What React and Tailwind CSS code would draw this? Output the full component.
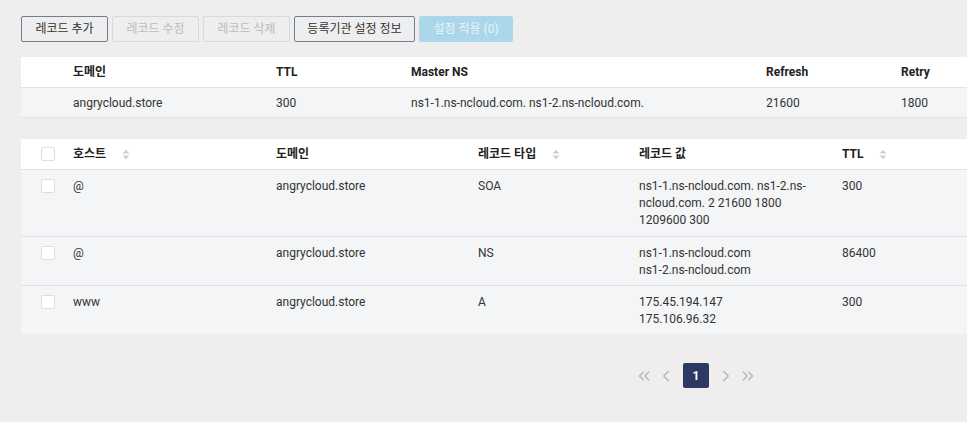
import { ChevronsLeft, ChevronLeft, ChevronRight, ChevronsRight } from 'lucide-react';

const font = { fontFamily: "Roboto, 'Noto Sans CJK KR', sans-serif" };

function SortIcon() {
  return (
    <svg width="8" height="11" viewBox="0 0 8 11" className="ml-[16px] shrink-0">
      <path d="M4 0.5 L7.5 4.5 H0.5 Z" fill="#cfd1d4" />
      <path d="M4 10.5 L7.5 6.5 H0.5 Z" fill="#cfd1d4" />
    </svg>
  );
}

function Checkbox() {
  return <span className="block w-[14px] h-[14px] bg-white border border-[#dcdee2] rounded-[2px]" />;
}

const zoneCols = 'grid grid-cols-[203px_135px_355px_135px_470px]';
const recCols = 'grid grid-cols-[52px_203px_202px_161px_203px_529px]';

const records = [
  { host: '@', type: 'SOA', value: ['ns1-1.ns-ncloud.com. ns1-2.ns-', 'ncloud.com. 2 21600 1800', '1209600 300'], ttl: '300' },
  { host: '@', type: 'NS', value: ['ns1-1.ns-ncloud.com', 'ns1-2.ns-ncloud.com'], ttl: '86400' },
  { host: 'www', type: 'A', value: ['175.45.194.147', '175.106.96.32'], ttl: '300' },
];

export default function App() {
  const btn = 'h-[26px] text-[12px] border rounded-[2px] flex items-center justify-center whitespace-nowrap';
  return (
    <div className="w-[967px] h-[422px] overflow-hidden bg-[#eeeeee] text-[12px] text-[#333]" style={font}>
      <div className="w-[1350px] ml-[21px] pt-[16px]">
        <div className="flex gap-[4px]">
          <button className={`${btn} w-[87px] border-[#6f8094] text-[#333]`}>레코드 추가</button>
          <button className={`${btn} w-[87px] border-[#d7d9dc] text-[#bcbcbc]`}>레코드 수정</button>
          <button className={`${btn} w-[87px] border-[#d7d9dc] text-[#bcbcbc]`}>레코드 삭제</button>
          <button className={`${btn} w-[121px] border-[#6f8094] text-[#333]`}>등록기관 설정 정보</button>
          <button className={`${btn} w-[94px] border-[#acd7ea] bg-[#acd7ea] text-[#e8f4fa]`}>설정 적용 (0)</button>
        </div>

        <div className="mt-[15px]">
          <div className={`${zoneCols} pl-[52px] h-[31px] items-center bg-white border-b border-[#dfe1e4] font-bold text-[#222]`}>
            <div>도메인</div>
            <div>TTL</div>
            <div>Master NS</div>
            <div>Refresh</div>
            <div>Retry</div>
          </div>
          <div className={`${zoneCols} pl-[52px] h-[30px] items-center bg-[#f4f5f7] border-b border-[#e0e2e5]`}>
            <div>angrycloud.store</div>
            <div>300</div>
            <div>ns1-1.ns-ncloud.com. ns1-2.ns-ncloud.com.</div>
            <div>21600</div>
            <div>1800</div>
          </div>
        </div>

        <div className="mt-[21px]">
          <div className={`${recCols} h-[31px] items-center bg-white border-b border-[#dfe1e4] font-bold text-[#222]`}>
            <div className="pl-[20px]"><Checkbox /></div>
            <div className="flex items-center">호스트<SortIcon /></div>
            <div>도메인</div>
            <div className="flex items-center">레코드 타입<SortIcon /></div>
            <div>레코드 값</div>
            <div className="flex items-center">TTL<SortIcon /></div>
          </div>
          {records.map((r, i) => (
            <div
              key={i}
              className={`${recCols} bg-[#f4f5f7] pt-[8px] leading-[17px] ${i === 0 ? 'pb-[7px]' : 'pb-[6px]'} ${i < records.length - 1 ? 'border-b border-[#dfe1e4]' : ''}`}
            >
              <div className="pl-[20px] pt-[1px]"><Checkbox /></div>
              <div>{r.host}</div>
              <div>angrycloud.store</div>
              <div>{r.type}</div>
              <div>
                {r.value.map((v) => (
                  <div key={v}>{v}</div>
                ))}
              </div>
              <div>{r.ttl}</div>
            </div>
          ))}
        </div>

        <div className="mt-[29px] flex justify-center items-center">
          <span className="w-[18px] flex justify-center text-[#b5b5b5]"><ChevronsLeft size={18} strokeWidth={2} /></span>
          <span className="w-[18px] ml-[4px] flex justify-center text-[#b5b5b5]"><ChevronLeft size={18} strokeWidth={2} /></span>
          <span className="w-[26px] h-[25px] mx-[8px] flex items-center justify-center bg-[#2c3a63] text-white font-bold rounded-[2px]">1</span>
          <span className="w-[18px] flex justify-center text-[#b5b5b5]"><ChevronRight size={18} strokeWidth={2} /></span>
          <span className="w-[18px] ml-[4px] flex justify-center text-[#b5b5b5]"><ChevronsRight size={18} strokeWidth={2} /></span>
        </div>
      </div>
    </div>
  );
}
